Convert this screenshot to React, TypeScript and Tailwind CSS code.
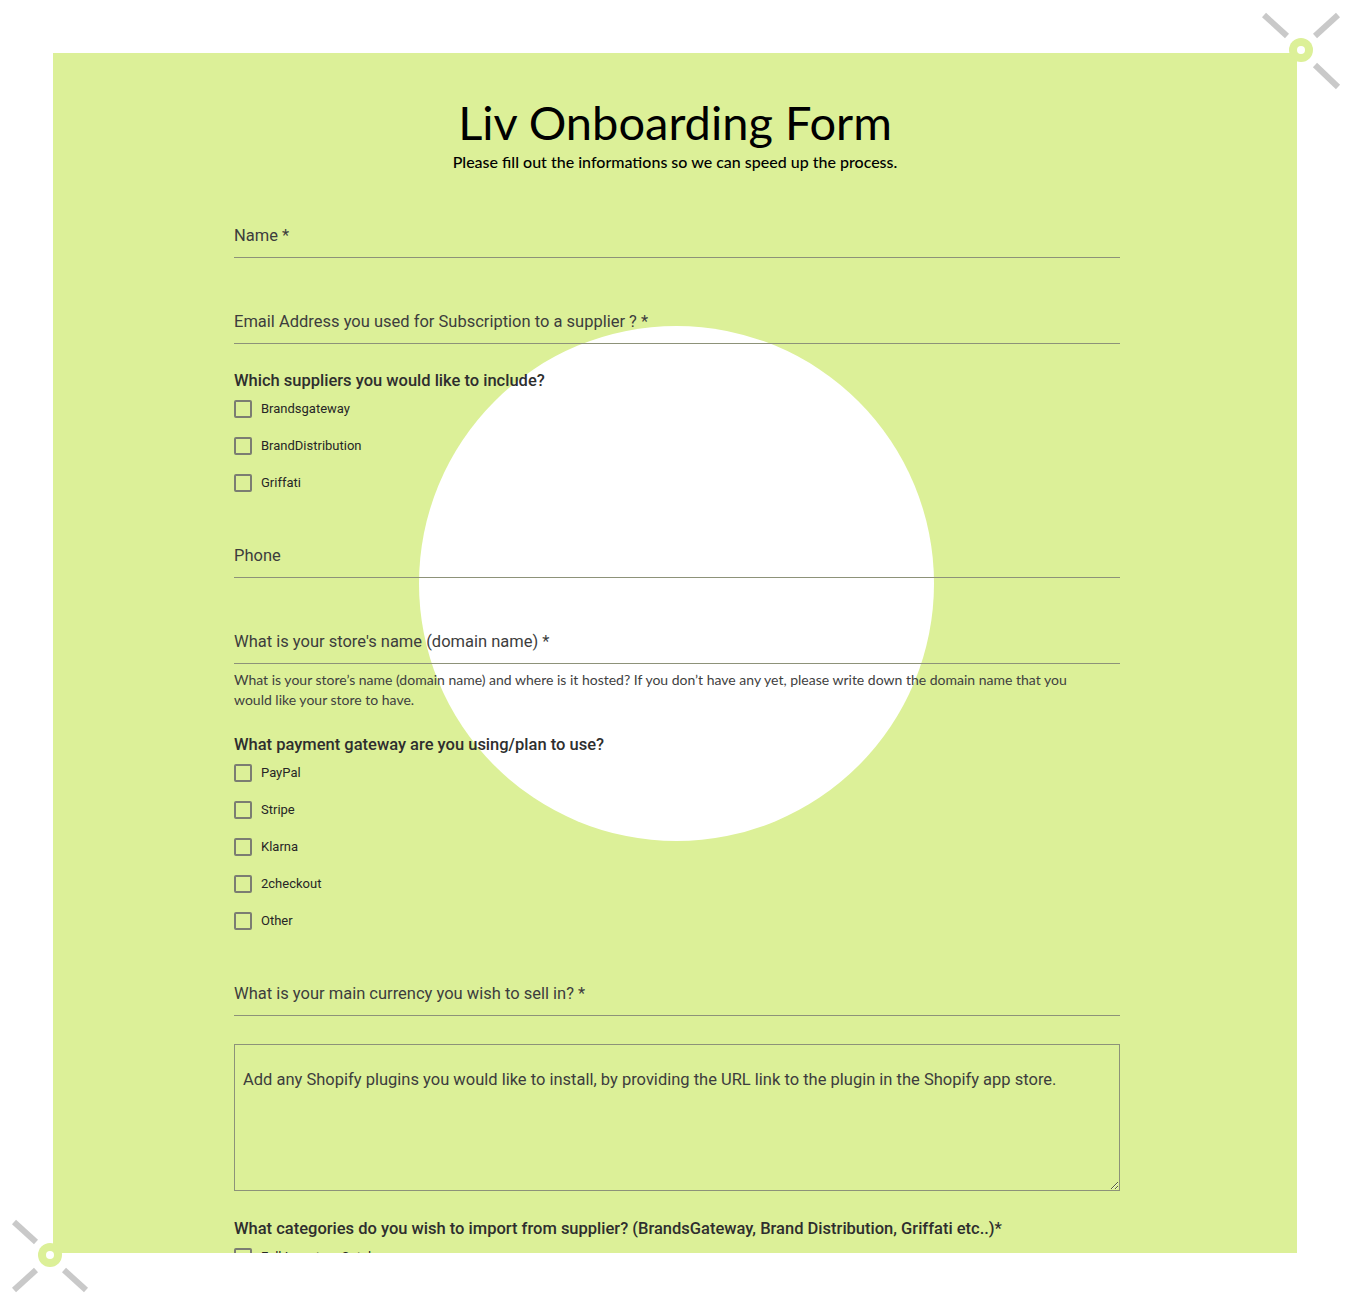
import React from 'react';

const GREEN = '#dcf098';

function TextField({ label, className = '' }: { label: string; className?: string }) {
  return (
    <div className={className}>
      <div className="border-b border-[#8d9279] pb-[11px] text-[16.5px] leading-5 text-[#3d3d3d]">{label}</div>
    </div>
  );
}

function CheckRow({ label }: { label: string }) {
  return (
    <div className="flex h-[37px] items-center">
      <span className="h-[18px] w-[18px] rounded-[2px] border-2 border-[#7b7d72]" />
      <span className="ml-[9px] text-[13px] text-[#262626]">{label}</span>
    </div>
  );
}

function CheckGroup({ title, options, className = '' }: { title: string; options: string[]; className?: string }) {
  return (
    <div className={className}>
      <div className="text-[16.5px] font-medium leading-5 text-[#2e2e2e]">{title}</div>
      <div className="-mt-px">
        {options.map(o => (
          <CheckRow key={o} label={o} />
        ))}
      </div>
    </div>
  );
}

function Decorations() {
  return (
    <svg className="pointer-events-none absolute left-0 top-0" width="1351" height="1306" viewBox="0 0 1351 1306">
      <g stroke="#c9c9c9" strokeWidth="6">
        <line x1="1264" y1="15" x2="1287" y2="36" />
        <line x1="1338" y1="15" x2="1315" y2="36" />
        <line x1="1315" y1="65" x2="1338" y2="87" />
        <line x1="14" y1="1222" x2="36" y2="1242" />
        <line x1="14" y1="1290" x2="36" y2="1270" />
        <line x1="64" y1="1270" x2="86" y2="1290" />
      </g>
      <circle cx="1301" cy="50" r="12" fill={GREEN} />
      <circle cx="1301" cy="50" r="4" fill="#fff" />
      <circle cx="50" cy="1255" r="12" fill={GREEN} />
      <circle cx="50" cy="1255" r="4" fill="#fff" />
    </svg>
  );
}

export default function App() {
  return (
    <div className="relative h-[1306px] w-[1351px] bg-white p-[53px] font-['Roboto',sans-serif]">
      <div className="relative h-[1200px] w-[1244px] overflow-hidden bg-[#dcf098]">
        <div className="absolute left-[366px] top-[273px] h-[515px] w-[515px] rounded-full bg-white" />
        <div className="relative">
          <div className="pt-[42px] text-center font-['Lato',sans-serif] text-black">
            <h1 className="text-[47px] leading-[55px]">Liv Onboarding Form</h1>
            <p className="mt-[2px] text-[16px] font-medium leading-5">
              Please fill out the informations so we can speed up the process.
            </p>
          </div>
          <div className="ml-[181px] w-[886px]">
            <TextField className="mt-[54px]" label="Name *" />
            <TextField className="mt-[54px]" label="Email Address you used for Subscription to a supplier ? *" />
            <CheckGroup
              className="mt-[27px]"
              title="Which suppliers you would like to include?"
              options={['Brandsgateway', 'BrandDistribution', 'Griffati']}
            />
            <TextField className="mt-[45px]" label="Phone" />
            <TextField className="mt-[54px]" label="What is your store's name (domain name) *" />
            <p className="mt-[6px] pr-[30px] font-['Lato',sans-serif] text-[14px] leading-5 text-[#3f3f3f]">
              What is your store’s name (domain name) and where is it hosted? If you don’t have any yet, please write down the domain name that you would like your store to have.
            </p>
            <CheckGroup
              className="mt-[25px]"
              title="What payment gateway are you using/plan to use?"
              options={['PayPal', 'Stripe', 'Klarna', '2checkout', 'Other']}
            />
            <TextField className="mt-[45px]" label="What is your main currency you wish to sell in? *" />
            <textarea
              className="mt-[28px] block h-[147px] w-[886px] border border-[#8d9279] bg-transparent px-2 pt-[25px] text-[16.5px] leading-5 text-[#3d3d3d] outline-none placeholder:text-[#3d3d3d]"
              placeholder="Add any Shopify plugins you would like to install, by providing the URL link to the plugin in the Shopify app store."
            />
            <CheckGroup
              className="mt-[28px]"
              title="What categories do you wish to import from supplier? (BrandsGateway, Brand Distribution, Griffati etc..)*"
              options={['Full Inventory Catalog', 'Women', 'Men']}
            />
          </div>
        </div>
      </div>
      <Decorations />
    </div>
  );
}
